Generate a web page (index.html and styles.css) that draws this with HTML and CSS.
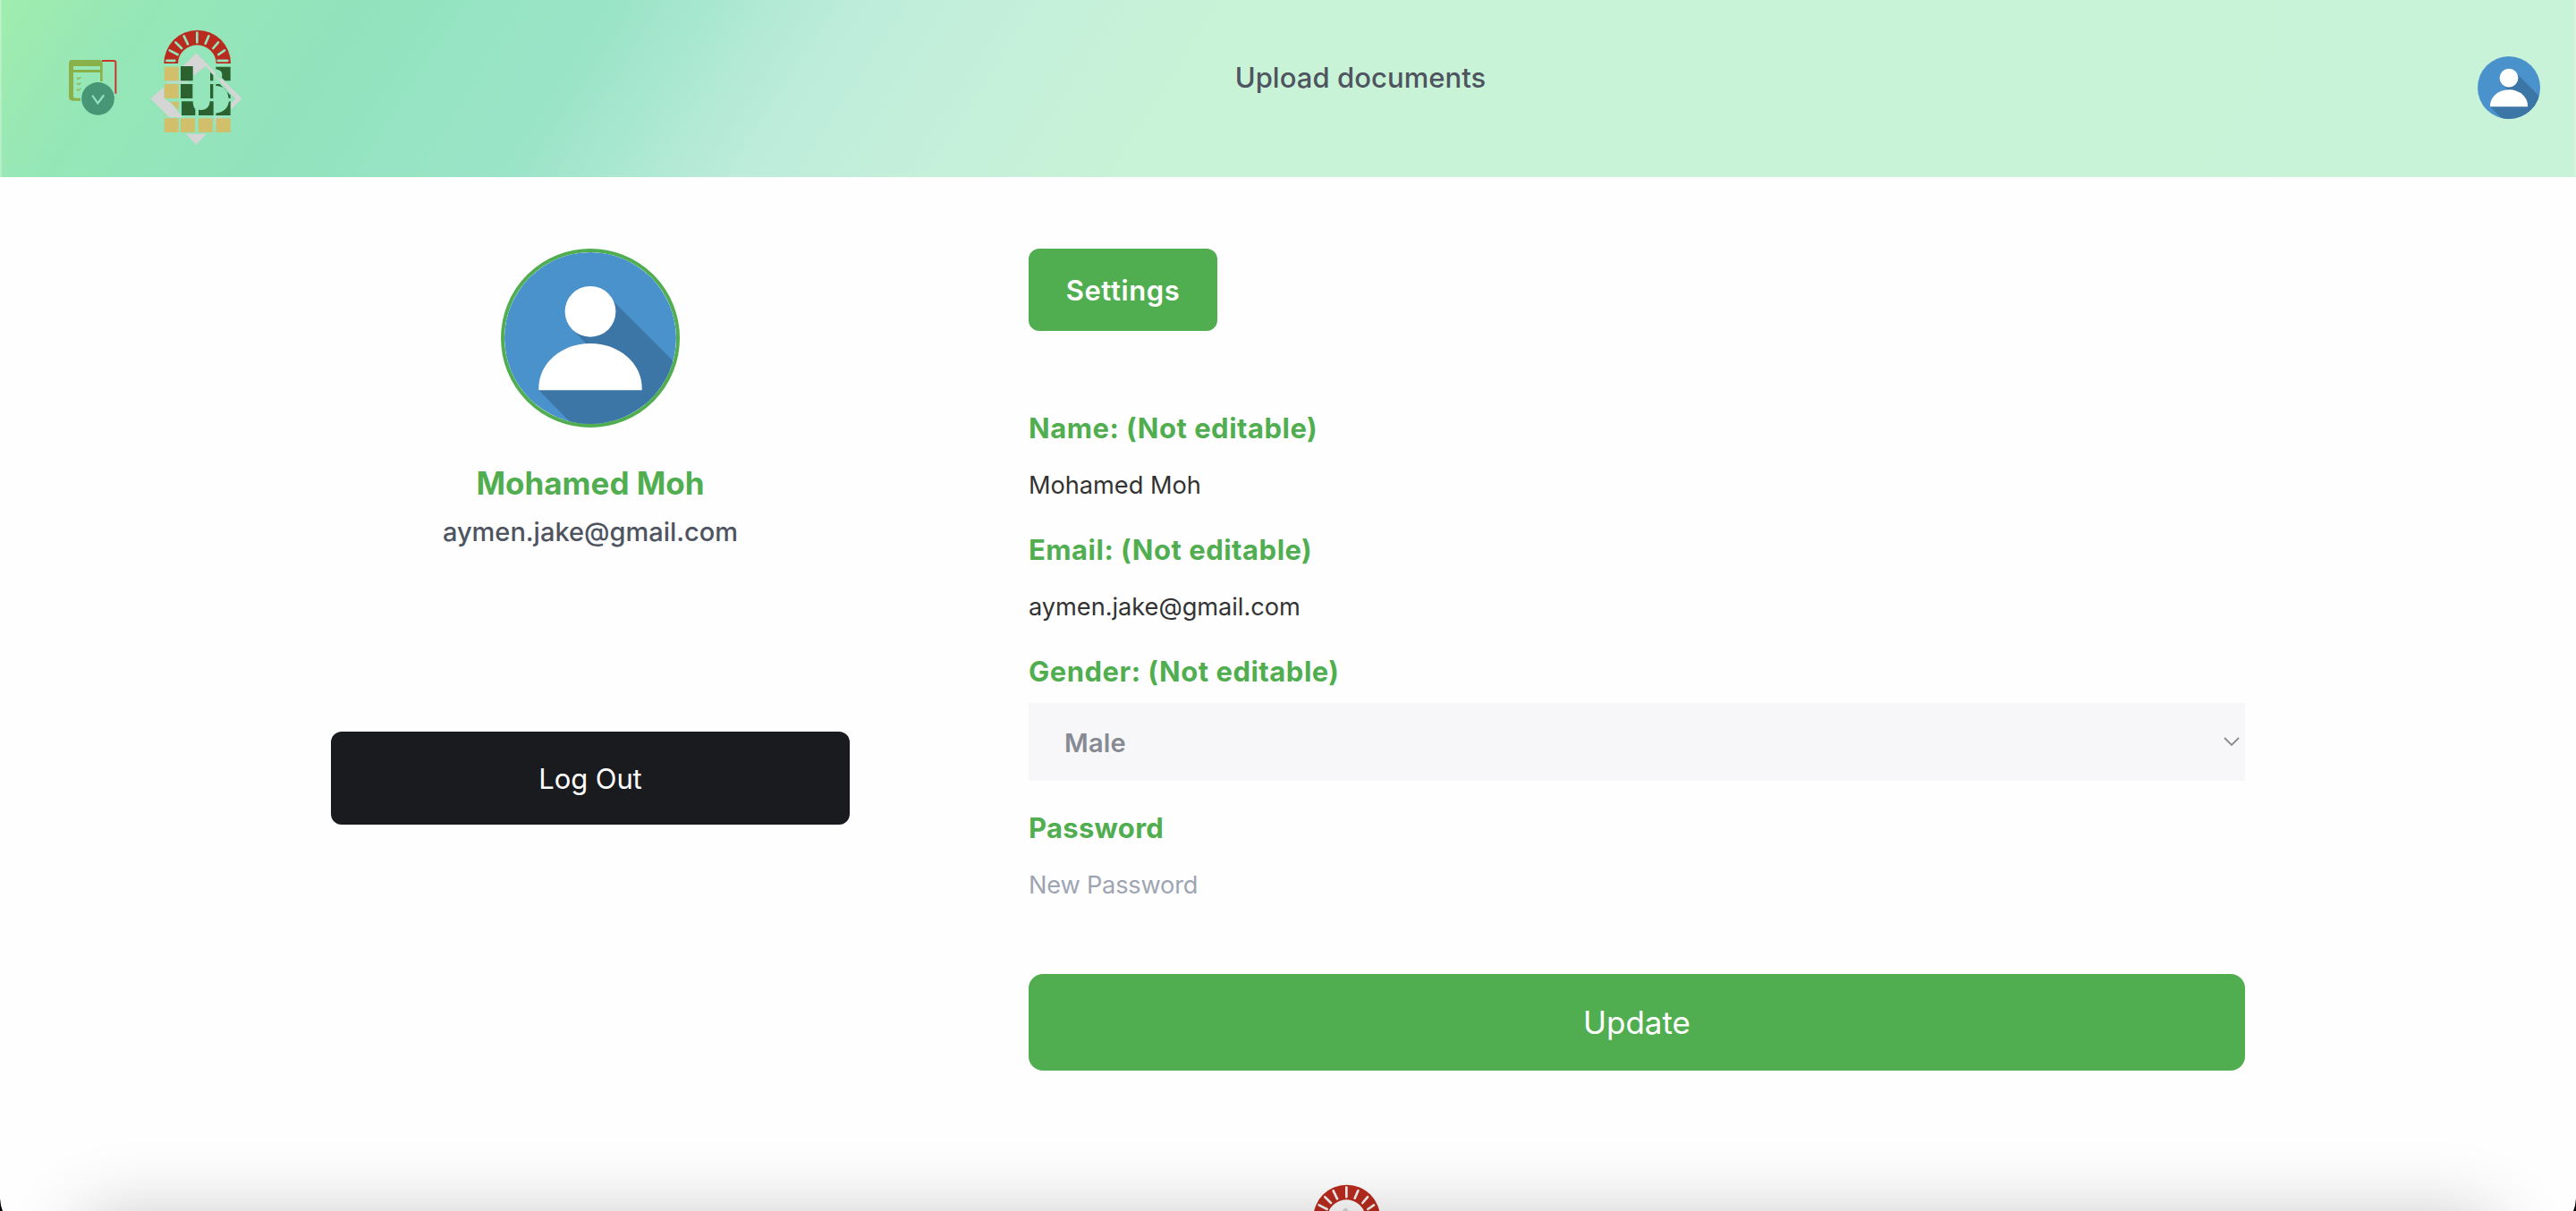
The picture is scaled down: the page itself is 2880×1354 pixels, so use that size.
FILE: index.html
```html
<!DOCTYPE html>
<html lang="en">
<head>
<meta charset="utf-8">
<title>Profile settings</title>
<link rel="stylesheet" href="styles.css">
</head>
<body>
<svg class="defs" aria-hidden="true">
  <symbol id="logo" viewBox="354 69 312 390">
    <g fill="#d5d5d5">
      <path d="M400 262L355 301L418 364H462L426 318L401 301Z"/>
      <path d="M414 241H480V250H404Z" opacity=".55"/>
      <path d="M473 419H543L508 455Z"/>
      <path d="M570 360H597L570 396Z" opacity=".45"/>
      <path d="M508 148L661 301L625 337V316L640 301L540 192L498 224V192H464Z"/>
    </g>
    <path fill="#d2bf6c" d="M401 194h48v47h-48zM401 252h48v48h-48zM420 311h29v29zM401 352l8 6h-8zM401 367h48v47h-48zM456 367h48v47h-48zM515 367h48v47h-48zM574 367h49v47h-49z"/>
    <path fill="#2b622f" d="M456 192h41v49h-41zM456 252h40v48h-40zM459 310h38q0 18 8 26v21h-46zM516 338q36 6 38-28h12v47h-50zM555 212l10 10v19h-10zM555 252h10v48h-10zM574 194h49v47h-19l-30-30zM574 252h13l36 38v10h-6q-5-42-43-42zM618 310h5v47h-49v-7q38-4 44-40z"/>
    <path fill="currentColor" d="M573 202q22 3 22 19t-8 16l-14-14z"/>
    <path fill="#b92b1e" d="M400 183a112 112 0 0 1 224 0H575a64 62 0 0 0-128 0Z"/>
    <g stroke="currentColor" stroke-width="8" stroke-linecap="round">
      <path d="M511 80V112M550 91L539 116M467 91L480 118M582 112L565 132M439 112L459 132M603 139L583 153M419 139L446 153"/>
      <path d="M409 173.500H436M581 173.500H613"/>
    </g>
  </symbol>
  <symbol id="person" viewBox="0 0 192 192">
    <clipPath id="disc"><circle cx="96" cy="96" r="96"/></clipPath>
    <g clip-path="url(#disc)">
      <path fill="#4a92cc" d="M0 0h192v192H0z"/>
      <path fill="#3c76a7" d="M122 55L194 127V194H77.500L38.300 154.300L91 102L77.500 88Z"/>
      <circle cx="96" cy="66.300" r="28.400" fill="#fff"/>
      <path fill="#fff" d="M38.300 154.300v-2.500C38.300 124 64 102 96 102s57.700 22 57.700 49.800v2.500Z"/>
    </g>
  </symbol>
</svg>

<header class="header">
  <div class="brand">
    <svg class="menu-icon" viewBox="78 168 168 192">
      <path d="M192 174H231Q238 174 238 181V284" fill="none" stroke="#c8372f" stroke-width="6"/>
      <path fill="#8ab049" fill-rule="evenodd" d="M92 171H182Q194 171 194 183V243H186V213H96V293Q96 299 102 299H120V308H94Q81 308 81 295V183Q81 171 92 171ZM96 192V204H186V192Z"/>
      <path d="M107 230q5 7 9 3t6-3M107 249q5 7 9 3t6-3M107 269q5 6 9 2t6-3" fill="none" stroke="#8ab049" stroke-width="3.500"/>
      <circle cx="178.500" cy="301" r="55" fill="#479676"/>
      <path d="M161 292L178 316L197 291" fill="none" stroke="#94e3bd" stroke-width="6.500" stroke-linecap="round"/>
    </svg>
    <svg class="logo"><use href="#logo"/></svg>
  </div>
  <nav class="nav"><a class="nav-link">Upload documents</a></nav>
  <svg class="account"><use href="#person"/></svg>
</header>

<main class="main">
  <aside class="profile">
    <svg class="avatar"><use href="#person"/></svg>
    <h1 class="profile-name">Mohamed Moh</h1>
    <p class="profile-email">aymen.jake@gmail.com</p>
    <button class="logout">Log Out</button>
  </aside>
  <section class="settings">
    <div class="tab">Settings</div>
    <div class="label">Name: (Not editable)</div>
    <div class="value">Mohamed Moh</div>
    <div class="label">Email: (Not editable)</div>
    <div class="value">aymen.jake@gmail.com</div>
    <div class="label gender">Gender: (Not editable)</div>
    <div class="select">
      <span>Male</span>
      <svg class="chevron" viewBox="0 0 18 11"><path d="M1 1L9 9L17 1" fill="none" stroke="#8b8c91" stroke-width="1.800"/></svg>
    </div>
    <div class="label password">Password</div>
    <div class="value placeholder">New Password</div>
    <button class="update">Update</button>
  </section>
</main>

<footer class="footer"><svg class="logo"><use href="#logo"/></svg></footer>
<div class="dock-shadow"></div>
<svg class="corner corner-left" viewBox="0 0 3 14"><path d="M0 0Q.5 8 3 14H0Z"/></svg>
<svg class="corner corner-right" viewBox="0 0 3 14"><path d="M3 0Q2.500 8 0 14H3Z"/></svg>
</body>
</html>
```
FILE: styles.css
```css
* { box-sizing: border-box; margin: 0; padding: 0; }
body {
  position: relative;
  height: 1354px;
  overflow: hidden;
  background: #fefefe;
  font-family: Inter, "Liberation Sans", sans-serif;
  color: #4f5461;
}
svg { display: block; }
button { border: 0; font-family: inherit; color: #fff; }
.defs { position: absolute; width: 0; height: 0; }

.header {
  height: 198px;
  display: flex;
  justify-content: space-between;
  align-items: flex-start;
  padding: 0 38px 0 74px;
  border: solid rgba(255, 255, 255, .25);
  border-width: 0 2px;
  background: linear-gradient(123deg, #a0edb0 0, #9eebb1 40px, #95e6b7 150px, #92e3bd 350px, #9ae4c8 580px, #bdecdb 800px, #c5f0da 980px, #c9f3d6 1180px, #c8f3d8 100%) border-box;
}
.brand { display: flex; gap: 36px; padding-top: 33px; }
.menu-icon { width: 56px; height: 64px; margin-top: 33px; }
.logo { width: 104px; height: 130px; color: #94e4bc; }
.nav { padding-top: 67px; }
.nav-link { display: block; font-size: 31px; line-height: 40px; font-weight: 480; letter-spacing: .06px; }
.account { width: 70px; height: 70px; margin-top: 63px; }

.main {
  display: grid;
  grid-template-columns: 580px 1360px;
  column-gap: 200px;
  padding: 80px 0 0 370px;
  height: 1126px;
  align-items: start;
}
.profile { display: flex; flex-direction: column; align-items: center; }
.avatar { width: 200px; height: 200px; border: 4px solid #51ae50; border-radius: 50%; }
.profile-name { margin-top: 40px; font-size: 35px; line-height: 44px; font-weight: 650; color: #51ae50; }
.profile-email { margin-top: 13px; font-size: 29px; line-height: 40px; font-weight: 480; }
.logout {
  width: 100%;
  height: 104px;
  margin-top: 203px;
  border-radius: 12px;
  background: #1a1b1f;
  font-size: 31px;
  letter-spacing: -.1px;
}

.tab {
  width: 211px;
  height: 92px;
  margin-bottom: 89px;
  border-radius: 12px;
  background: #51ae50;
  color: #fff;
  text-align: center;
  font-size: 31px;
  font-weight: 600;
  line-height: 94px;
  letter-spacing: .6px;
}
.label { font-size: 31px; line-height: 40px; font-weight: 700; letter-spacing: .5px; color: #51ae50; }
.value { margin: 20px 0 28px; font-size: 27.2px; line-height: 48px; letter-spacing: -.03px; color: #333; }
.select {
  display: flex;
  justify-content: space-between;
  align-items: center;
  height: 87px;
  margin: 15px 0 33px;
  padding: 0 6px 0 40px;
  background: #f7f7fa;
  color: #878a92;
  font-size: 29px;
  line-height: 40px;
  font-weight: 600;
  letter-spacing: .17px;
}
.select span { padding-top: 2px; }
.chevron { width: 18px; height: 11px; }
.password { letter-spacing: .3px; }
.placeholder { margin-bottom: 75px; color: #9ea5b2; letter-spacing: -.2px; }
.update {
  display: block;
  width: 100%;
  height: 108px;
  border-radius: 16px;
  background: #51ae50;
  font-size: 35px;
}

.footer { display: flex; height: 30px; overflow: hidden; padding-left: 1453px; }
.footer .logo { flex: none; color: #f4f4f4; }
.dock-shadow {
  position: absolute;
  left: 95px;
  right: 95px;
  top: 1364px;
  height: 300px;
  box-shadow: 0 0 80px rgba(0, 0, 0, .24);
}
.corner { position: absolute; bottom: 0; width: 3px; height: 14px; }
.corner-left { left: 0; }
.corner-right { right: 0; }
```
